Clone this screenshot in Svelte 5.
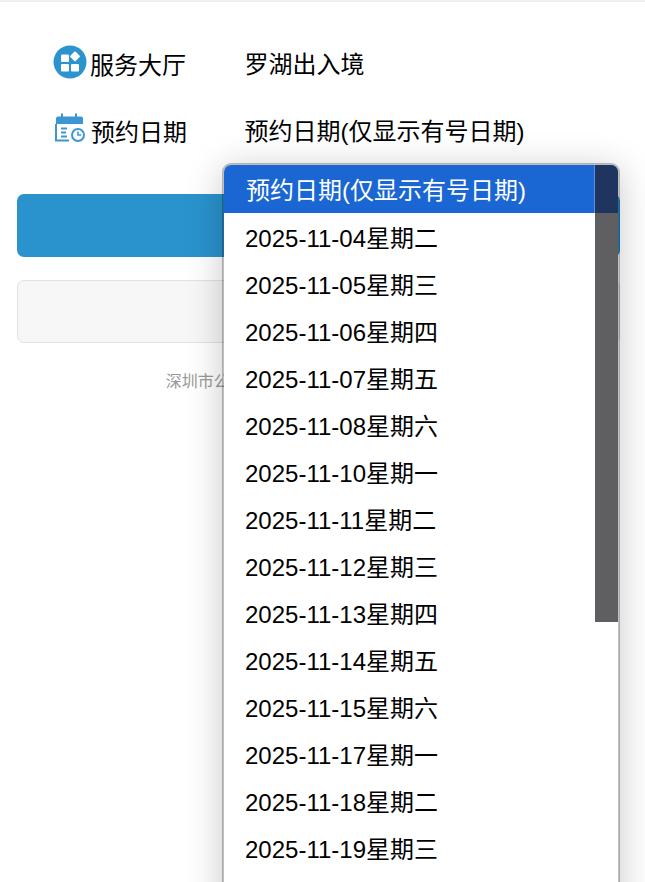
<script>
  const dates = ['2025-11-04星期二','2025-11-05星期三','2025-11-06星期四','2025-11-07星期五','2025-11-08星期六','2025-11-10星期一','2025-11-11星期二','2025-11-12星期三','2025-11-13星期四','2025-11-14星期五','2025-11-15星期六','2025-11-17星期一','2025-11-18星期二','2025-11-19星期三'];
</script>

<div class="page">
  <div class="field">
    <svg class="hall" width="34" height="34" viewBox="0 0 34 34">
      <circle cx="17" cy="17" r="16.5" fill="#2b94cf"/>
      <rect x="8" y="9.5" width="8" height="7.5" rx="1" fill="#fff"/>
      <rect x="8" y="19" width="8" height="7.5" rx="1" fill="#fff"/>
      <rect x="18" y="19" width="8" height="7.5" rx="1" fill="#fff"/>
      <rect x="18.2" y="7.6" width="7.6" height="7.6" rx="1" fill="#fff" transform="rotate(45 22 11.4)"/>
    </svg>
    <span class="label a">服务大厅</span>
    <span class="value">罗湖出入境</span>
  </div>
  <div class="field">
    <svg class="cal" width="30" height="30" viewBox="0 0 30 30">
      <path d="M1 5.5a2 2 0 0 1 2-2h23a2 2 0 0 1 2 2V11H1z" fill="#3b97d3"/>
      <rect x="6" y="0.5" width="2" height="5" fill="#3b97d3"/>
      <rect x="20" y="0.5" width="2" height="5" fill="#3b97d3"/>
      <path d="M1 11v16.5h13" fill="none" stroke="#3b97d3" stroke-width="2"/>
      <path d="M6 15.5h6M6 19.5h5M6 23.5h6" stroke="#3b97d3" stroke-width="1.8" fill="none"/>
      <circle cx="23" cy="22" r="6" fill="#fff" stroke="#3b97d3" stroke-width="2"/>
      <path d="M23 18.5V22h3.2" fill="none" stroke="#3b97d3" stroke-width="1.6"/>
    </svg>
    <span class="label b">预约日期</span>
    <span class="value">预约日期(仅显示有号日期)</span>
  </div>

  <div class="actions">
    <div class="btn primary"></div>
    <div class="btn plain"></div>
    <p class="foot">深圳市公安局出入境管理局版权所有2025年</p>
  </div>

  <div class="popup">
    <div class="item selected">预约日期(仅显示有号日期)</div>
    {#each dates as d}
      <div class="item">{d}</div>
    {/each}
    <div class="thumb"></div>
  </div>
</div>

<style>
  :global(body) { margin: 0; background: #fff; }
  .page {
    position: relative;
    height: 882px;
    overflow: hidden;
    box-sizing: border-box;
    border-top: 2px solid #eeeeee;
    padding-top: 27px;
    font-family: "Liberation Sans", "Noto Sans CJK SC", sans-serif;
    font-size: 24px;
    color: #000;
  }
  .field {
    display: flex;
    align-items: center;
    height: 67px;
    padding-left: 53px;
  }
  .hall { flex: none; margin-top: -2px; }
  .cal { flex: none; margin-left: 2px; margin-top: -3px; }
  .label { flex: none; margin-top: 2px; }
  .label.a { margin-left: 3px; width: 154.5px; }
  .label.b { margin-left: 6px; width: 153.5px; }
  .actions {
    margin: 31px 0 0 17px;
    width: 603px;
  }
  .btn { box-sizing: border-box; height: 63px; border-radius: 7px; }
  .primary { background: #2a93cd; }
  .plain {
    margin-top: 23px;
    background: #f7f7f7;
    border: 1px solid #e2e2e2;
  }
  .foot {
    margin: 29px 0 0;
    padding-left: 2px;
    text-align: center;
    font-size: 16px;
    line-height: 20px;
    color: #999;
  }
  .popup {
    position: absolute;
    left: 222px;
    top: 161px;
    width: 398px;
    bottom: -60px;
    box-sizing: border-box;
    border: 2px solid rgba(0, 0, 0, 0.25);
    border-bottom: 0;
    border-radius: 9px 9px 0 0;
    background: #fff;
    background-clip: padding-box;
    box-shadow: 0 6px 36px rgba(0, 0, 0, 0.22);
  }
  .item {
    box-sizing: border-box;
    height: 47px;
    padding: 4px 0 0 21px;
    line-height: 43px;
    white-space: nowrap;
  }
  .selected {
    height: 48px;
    padding: 5px 0 0 22px;
    line-height: 42px;
    background: #1a66d2;
    color: #fff;
    border-radius: 7px 7px 0 0;
  }
  .thumb {
    position: absolute;
    top: 0;
    right: 0;
    width: 23px;
    height: 457px;
    border-top-right-radius: 7px;
    background: linear-gradient(#1f3560 0 48px, #5f5f62 48px);
  }
  .thumb::before {
    content: "";
    position: absolute;
    left: -1px;
    top: 0;
    width: 1px;
    height: 48px;
    background: #5a92e0;
  }
</style>
